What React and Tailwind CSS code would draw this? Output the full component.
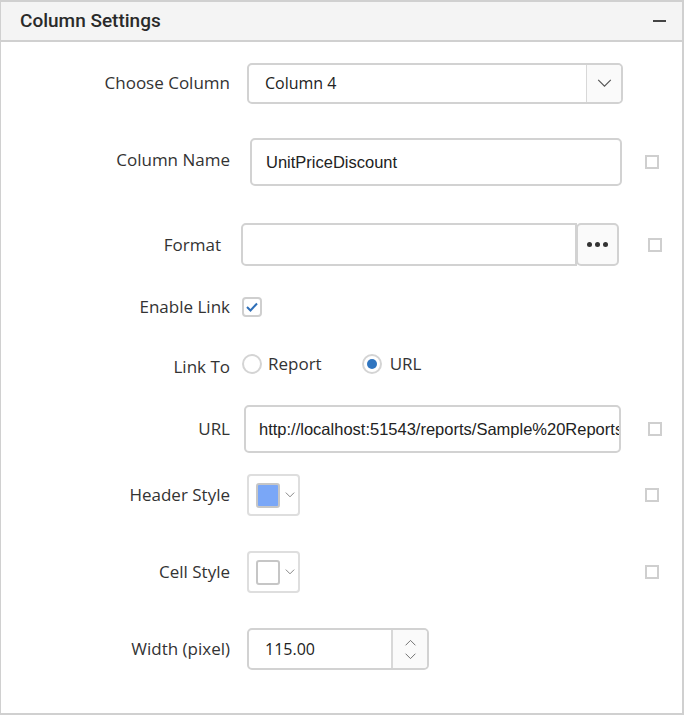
import React from 'react';

const label = "text-[17px] text-[#333] text-right";
const font = { fontFamily: '"Open Sans", sans-serif' };
const arial = { fontFamily: '"Liberation Sans", Arial, sans-serif' };

const SmallBox = ({ className = '' }) => (
  <span className={`block w-[14px] h-[14px] border-2 border-[#cfcfcf] bg-white ${className}`} />
);

const Chevron = ({ className = '', up = false }) => (
  <svg viewBox="0 0 16 10" className={className} fill="none" stroke="currentColor" strokeWidth="1.3">
    {up ? <path d="M1 9 L8 2 L15 9" /> : <path d="M1 1 L8 8 L15 1" />}
  </svg>
);

const ColorPicker = ({ color }) => (
  <div className="w-[53px] h-[42px] border-2 border-[#dedede] rounded-[4px] flex items-center pl-[7px] bg-white">
    <span className="block w-[24px] h-[25px] border-2 border-[#c6c6c6] rounded-[3px]" style={{ background: color }} />
    <Chevron className="w-[10px] h-[6px] ml-[5px] text-[#666]" />
  </div>
);

export default function App() {
  return (
    <div className="w-[685px] h-[715px] bg-white" style={font}>
      <div className="w-[684px] h-[715px] border-t-2 border-r-2 border-b-2 border-l border-[#d0d0d0] flex flex-col">
        <div className="h-[40px] shrink-0 bg-[#f4f4f4] border-b-2 border-[#d0d0d0] flex items-center pl-[19px] pr-[16px]">
          <span className="text-[19px] font-medium text-[#2a2a2a]" style={{ fontFamily: 'Roboto, sans-serif' }}>Column Settings</span>
          <span className="ml-auto block w-[13px] h-[2px] bg-[#444]" />
        </div>

        <div className="flex flex-col">
          {/* Choose Column */}
          <div className="flex items-center h-[40px] mt-[21px]">
            <div className={`w-[229px] ${label}`}>Choose Column</div>
            <div className="ml-[17px] w-[376px] h-[41px] border-2 border-[#d2d2d2] rounded-[5px] flex items-stretch">
              <span className="flex-1 flex items-center pl-[16px] text-[16px] text-[#222]">Column 4</span>
              <span className="w-[35px] border-l border-[#d8d8d8] bg-[#fafafa] rounded-r-[4px] flex items-center justify-center">
                <Chevron className="w-[15px] h-[9px] text-[#555]" />
              </span>
            </div>
          </div>

          {/* Column Name */}
          <div className="flex items-center h-[48px] mt-[35px]">
            <div className={`w-[229px] ${label} -mt-[4px]`}>Column Name</div>
            <div className="ml-[20px] w-[372px] h-[48px] border-2 border-[#d2d2d2] rounded-[5px] flex items-center pl-[14px] text-[16.5px] text-[#222]" style={arial}>
              UnitPriceDiscount
            </div>
            <SmallBox className="ml-[23px]" />
          </div>

          {/* Format */}
          <div className="flex items-center h-[43px] mt-[37px]">
            <div className={`w-[220px] ${label}`}>Format</div>
            <div className="ml-[20px] flex">
              <div className="w-[336px] h-[43px] border-2 border-[#d2d2d2] rounded-l-[5px] bg-white" />
              <div className="w-[43px] h-[43px] border-2 border-[#d2d2d2] rounded-[5px] -ml-[1px] bg-[#fafafa] flex items-center justify-center gap-[3px]">
                <span className="w-[5px] h-[5px] rounded-full bg-[#333]" />
                <span className="w-[5px] h-[5px] rounded-full bg-[#333]" />
                <span className="w-[5px] h-[5px] rounded-full bg-[#333]" />
              </div>
            </div>
            <SmallBox className="ml-[29px]" />
          </div>

          {/* Enable Link */}
          <div className="flex items-center h-[20px] mt-[31px]">
            <div className={`w-[229px] ${label}`}>Enable Link</div>
            <span className="ml-[12px] w-[20px] h-[20px] border-2 border-[#cfcfcf] rounded-[4px] flex items-center justify-center bg-white">
              <svg viewBox="0 0 12 10" className="w-[12px] h-[10px]" fill="none" stroke="#2f6fb8" strokeWidth="2">
                <path d="M1 5 L4.5 8.5 L11 1.5" />
              </svg>
            </span>
          </div>

          {/* Link To */}
          <div className="flex items-center h-[20px] mt-[37px]">
            <div className={`w-[229px] ${label} mt-[5px]`}>Link To</div>
            <span className="ml-[12px] w-[20px] h-[20px] rounded-full border-2 border-[#d4d4d4] bg-white" />
            <span className="ml-[6px] text-[17px] text-[#333]">Report</span>
            <span className="ml-[40px] w-[20px] h-[20px] rounded-full border-2 border-[#d4d4d4] bg-white flex items-center justify-center">
              <span className="w-[10px] h-[10px] rounded-full bg-[#2f75c0]" />
            </span>
            <span className="ml-[8px] text-[17px] text-[#333]">URL</span>
          </div>

          {/* URL */}
          <div className="flex items-center h-[48px] mt-[31px]">
            <div className={`w-[229px] ${label}`}>URL</div>
            <div className="ml-[14px] w-[377px] h-[48px] border-2 border-[#d2d2d2] rounded-[5px] flex items-center pl-[13px] pr-[2px] overflow-hidden whitespace-nowrap text-[16.5px] text-[#222]" style={arial}>
              http://localhost:51543/reports/Sample%20Reports
            </div>
            <SmallBox className="ml-[27px]" />
          </div>

          {/* Header Style */}
          <div className="flex items-center h-[42px] mt-[21px]">
            <div className={`w-[229px] ${label}`}>Header Style</div>
            <div className="ml-[17px]"><ColorPicker color="#7aa7f7" /></div>
            <SmallBox className="ml-[345px]" />
          </div>

          {/* Cell Style */}
          <div className="flex items-center h-[42px] mt-[35px]">
            <div className={`w-[229px] ${label}`}>Cell Style</div>
            <div className="ml-[17px]"><ColorPicker color="#ffffff" /></div>
            <SmallBox className="ml-[345px]" />
          </div>

          {/* Width */}
          <div className="flex items-center h-[42px] mt-[35px]">
            <div className={`w-[229px] ${label}`}>Width (pixel)</div>
            <div className="ml-[17px] w-[182px] h-[42px] border-2 border-[#d2d2d2] rounded-[5px] flex items-stretch">
              <span className="flex-1 flex items-center pl-[16px] text-[16px] text-[#222]">115.00</span>
              <span className="w-[36px] border-l-2 border-[#d8d8d8] bg-[#fafafa] rounded-r-[4px] flex flex-col items-center justify-center gap-[7px]">
                <Chevron up className="w-[13px] h-[7px] text-[#666]" />
                <Chevron className="w-[13px] h-[7px] text-[#666]" />
              </span>
            </div>
          </div>
        </div>
      </div>
    </div>
  );
}
